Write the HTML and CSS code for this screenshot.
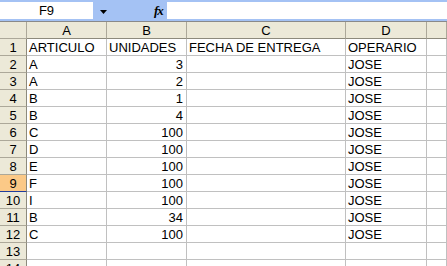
FILE: index.html
```html
<!DOCTYPE html>
<html lang="es">
<head>
    <meta charset="UTF-8">
    <meta name="viewport" content="width=device-width, initial-scale=1.0">
    <title>Hoja de entregas</title>
    <link rel="stylesheet" href="styles.css">
</head>
<body>
    <div class="formula-bar">
        <div class="name-box">F9</div>
        <div class="bar-tools">
            <svg class="drop-arrow" width="7" height="4" viewBox="0 0 7 4">
                <path d="M0 0H7L3.5 4Z" fill="#000"/>
            </svg>
            <span class="fx">fx</span>
        </div>
        <div class="formula-input"></div>
    </div>

    <div class="sheet">
        <div class="corner"></div>
        <div class="col-head">A</div>
        <div class="col-head">B</div>
        <div class="col-head">C</div>
        <div class="col-head">D</div>
        <div class="col-head"></div>

        <div class="row-head">1</div>
        <div class="cell">ARTICULO</div>
        <div class="cell">UNIDADES</div>
        <div class="cell">FECHA DE ENTREGA</div>
        <div class="cell">OPERARIO</div>
        <div class="cell"></div>

        <div class="row-head">2</div>
        <div class="cell">A</div>
        <div class="cell num">3</div>
        <div class="cell"></div>
        <div class="cell">JOSE</div>
        <div class="cell"></div>

        <div class="row-head">3</div>
        <div class="cell">A</div>
        <div class="cell num">2</div>
        <div class="cell"></div>
        <div class="cell">JOSE</div>
        <div class="cell"></div>

        <div class="row-head">4</div>
        <div class="cell">B</div>
        <div class="cell num">1</div>
        <div class="cell"></div>
        <div class="cell">JOSE</div>
        <div class="cell"></div>

        <div class="row-head">5</div>
        <div class="cell">B</div>
        <div class="cell num">4</div>
        <div class="cell"></div>
        <div class="cell">JOSE</div>
        <div class="cell"></div>

        <div class="row-head">6</div>
        <div class="cell">C</div>
        <div class="cell num">100</div>
        <div class="cell"></div>
        <div class="cell">JOSE</div>
        <div class="cell"></div>

        <div class="row-head">7</div>
        <div class="cell">D</div>
        <div class="cell num">100</div>
        <div class="cell"></div>
        <div class="cell">JOSE</div>
        <div class="cell"></div>

        <div class="row-head">8</div>
        <div class="cell">E</div>
        <div class="cell num">100</div>
        <div class="cell"></div>
        <div class="cell">JOSE</div>
        <div class="cell"></div>

        <div class="row-head active">9</div>
        <div class="cell">F</div>
        <div class="cell num">100</div>
        <div class="cell"></div>
        <div class="cell">JOSE</div>
        <div class="cell"></div>

        <div class="row-head">10</div>
        <div class="cell">I</div>
        <div class="cell num">100</div>
        <div class="cell"></div>
        <div class="cell">JOSE</div>
        <div class="cell"></div>

        <div class="row-head">11</div>
        <div class="cell">B</div>
        <div class="cell num">34</div>
        <div class="cell"></div>
        <div class="cell">JOSE</div>
        <div class="cell"></div>

        <div class="row-head">12</div>
        <div class="cell">C</div>
        <div class="cell num">100</div>
        <div class="cell"></div>
        <div class="cell">JOSE</div>
        <div class="cell"></div>

        <div class="row-head">13</div>
        <div class="cell"></div>
        <div class="cell"></div>
        <div class="cell"></div>
        <div class="cell"></div>
        <div class="cell"></div>

        <div class="row-head">14</div>
        <div class="cell"></div>
        <div class="cell"></div>
        <div class="cell"></div>
        <div class="cell"></div>
        <div class="cell"></div>
    </div>
</body>
</html>
```

FILE: styles.css
```css
* {
    box-sizing: border-box;
}

body {
    margin: 0;
    width: 447px;
    height: 266px;
    overflow: hidden;
    background: #fff;
    font-family: "Liberation Sans", Arial, sans-serif;
    font-size: 13px;
    color: #000;
}

/* formula bar */
.formula-bar {
    display: flex;
    height: 22px;
    padding: 2px 0;
    background: #a4c2f4;
    border-bottom: 1px solid #8a8a8a;
}
.name-box {
    width: 93px;
    height: 17px;
    background: #fff;
    text-align: center;
    line-height: 18px;
}
.bar-tools {
    width: 74px;
    display: flex;
    align-items: center;
    padding-left: 7px;
}
.drop-arrow {
    display: block;
    margin-top: 2px;
}
.fx {
    margin-left: 47px;
    font-family: "Liberation Serif", "Times New Roman", serif;
    font-style: italic;
    font-weight: bold;
    font-size: 13px;
    line-height: 17px;
    letter-spacing: -1px;
}
.formula-input {
    flex: 1;
    height: 17px;
    background: #fff;
}

/* sheet grid */
.sheet {
    display: grid;
    grid-template-columns: 27px 80px 80px 159px 81px 1fr;
    grid-auto-rows: 17px;
}
.corner,
.col-head,
.row-head {
    background: #ece9d8;
    border-right: 1px solid #aca899;
    border-bottom: 1px solid #aca899;
    text-align: center;
    padding-top: 2px;
    line-height: 14px;
    overflow: hidden;
}
.col-head {
    border-bottom-color: #8d8a7c;
}
.row-head {
    border-right-color: #8d8a7c;
}
.row-head.active {
    background: #fbc987;
    border-bottom-color: #1f3c9c;
}
.cell {
    border-right: 1px solid #c0c0c0;
    border-bottom: 1px solid #c0c0c0;
    padding: 2px 3px 0 2px;
    line-height: 14px;
    white-space: nowrap;
    overflow: hidden;
}
.cell.num {
    text-align: right;
}
```
